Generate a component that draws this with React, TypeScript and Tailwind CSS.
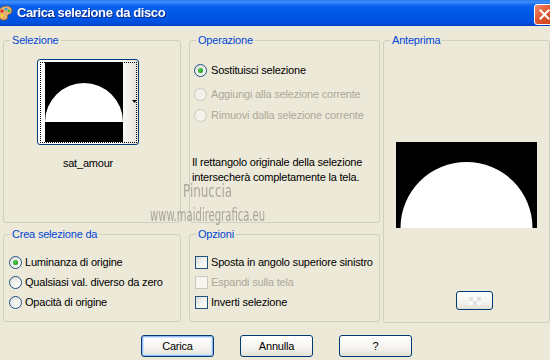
import type { ReactNode } from 'react'

function GroupBox({ title, className, children }: { title: string; className: string; children?: ReactNode }) {
  return (
    <fieldset className={`border border-[#d0d0bf] rounded-[3px] min-w-0 ${className}`}>
      <legend className="ml-[6px] px-[2px] text-[#0046d5] leading-[13px]">{title}</legend>
      {children}
    </fieldset>
  )
}

function Radio({ checked, disabled }: { checked?: boolean; disabled?: boolean }) {
  return (
    <span
      className={`w-[13px] h-[13px] rounded-full border shrink-0 flex items-center justify-center ${
        disabled
          ? 'border-[#cac8bb] bg-[#f2f1ea]'
          : 'border-[#1c5180] bg-[linear-gradient(135deg,#dcdcd7_0%,#f4f4f1_55%,#ffffff_100%)]'
      }`}
    >
      {checked && (
        <span className="w-[5px] h-[5px] rounded-full bg-[radial-gradient(circle_at_40%_40%,#55d455_0%,#21a121_60%,#1a8a1a_100%)]" />
      )}
    </span>
  )
}

function Checkbox({ disabled }: { disabled?: boolean }) {
  return (
    <span
      className={`w-[13px] h-[13px] border shrink-0 ${
        disabled
          ? 'border-[#cac8bb] bg-[#f6f5f0]'
          : 'border-[#1c5180] bg-[linear-gradient(135deg,#dcdcd7_0%,#f4f4f1_55%,#ffffff_100%)]'
      }`}
    />
  )
}

function XpButton({ label, isDefault }: { label: string; isDefault?: boolean }) {
  return (
    <button
      className={`w-[73px] h-[22px] border border-[#003c74] rounded-[3px] text-black bg-[linear-gradient(to_bottom,#ffffff_0%,#f4f3ee_60%,#e3e1d6_100%)] ${
        isDefault ? 'shadow-[inset_0_0_0_1px_#97b8f2,inset_0_0_0_2px_#cee7ff]' : ''
      }`}
    >
      {label}
    </button>
  )
}

export default function App() {
  return (
    <div className="w-[550px] h-[360px] overflow-hidden bg-[#ece9d8] font-['Liberation_Sans',Arial,sans-serif] text-[11px] tracking-[-0.2px] text-black relative">
      {/* Title bar */}
      <div className="h-[26px] relative flex items-center bg-[linear-gradient(to_bottom,#2a7af0_0%,#3d8ff8_8%,#0a62f0_22%,#0056e6_55%,#0053e1_85%,#0040c6_100%)]">
        <svg className="absolute left-[-4px] top-[5px]" width="17" height="16" viewBox="0 0 17 16">
          <path d="M2 8c0-4 4-7 8-7s6 2 6 5-3 3-4 4 1 4-3 5-7-2-7-7z" fill="#e8b070" stroke="#7a4a20" strokeWidth="0.8" />
          <circle cx="6" cy="6" r="1.6" fill="#e02020" />
          <circle cx="10" cy="4" r="1.5" fill="#20a0e0" />
          <circle cx="13" cy="6" r="1.3" fill="#30c030" />
          <circle cx="6" cy="10.5" r="1.4" fill="#f0e020" />
        </svg>
        <span className="ml-[17px] text-white font-bold text-[13px] tracking-[-0.4px] drop-shadow-[1px_1px_0_#0a2a8a]">
          Carica selezione da disco
        </span>
        <div className="absolute left-[534px] top-[4px] w-[21px] h-[21px] rounded-[3px] border border-white bg-[linear-gradient(135deg,#f08a6a_0%,#e25a32_45%,#c83a18_100%)] flex items-center justify-center">
          <svg width="11" height="11" viewBox="0 0 11 11">
            <path d="M1.5 1.5l8 8M9.5 1.5l-8 8" stroke="#fff" strokeWidth="2" strokeLinecap="square" />
          </svg>
        </div>
      </div>

      {/* Body */}
      <div className="flex pt-[8px] pl-[3px] gap-[3px]">
        <div className="flex flex-col gap-[5px]">
          <div className="flex gap-[8px]">
            <GroupBox title="Selezione" className="w-[178px] h-[189px]">
              <div className="ml-[33px] mt-[12px] w-[102px] flex flex-col items-center">
                <div className="relative w-[102px] h-[86px] border border-[#003c74] rounded-[3px] bg-[linear-gradient(to_right,#ffffff_0%,#ffffff_80%,#e4e2d8_100%)]">
                  <div className="absolute left-[2px] top-[2px] w-[97px] h-[81px] border border-dotted border-black" />
                  <svg className="absolute left-[7px] top-[2px]" width="78" height="80" viewBox="0 0 78 80">
                    <rect width="78" height="80" fill="#000" />
                    <path d="M0 60A39 39 0 0 1 78 60Z" fill="#fff" />
                  </svg>
                  <svg className="absolute left-[94px] top-[40px]" width="5" height="3" viewBox="0 0 5 3">
                    <path d="M0 0h5L2.5 3z" fill="#000" />
                  </svg>
                </div>
                <span className="mt-[10px] text-[11px]">sat_amour</span>
              </div>
            </GroupBox>
            <GroupBox title="Operazione" className="w-[191px] h-[189px]">
              <div className="flex flex-col">
                <div className="flex items-center gap-[4px] h-[16px] mt-[15px] pl-[4px]">
                  <Radio checked />
                  <span>Sostituisci selezione</span>
                </div>
                <div className="flex items-center gap-[4px] h-[16px] mt-[8px] pl-[4px] text-[#aca899]">
                  <Radio disabled />
                  <span>Aggiungi alla selezione corrente</span>
                </div>
                <div className="flex items-center gap-[4px] h-[16px] mt-[5px] pl-[4px] text-[#aca899]">
                  <Radio disabled />
                  <span>Rimuovi dalla selezione corrente</span>
                </div>
                <p className="mt-[32px] pl-[2px] leading-[15px]">
                  Il rettangolo originale della selezione
                  <br />
                  intersecherà completamente la tela.
                </p>
              </div>
            </GroupBox>
          </div>
          <div className="flex gap-[8px]">
            <GroupBox title="Crea selezione da" className="w-[178px] h-[94px]">
              <div className="flex flex-col mt-[11px] pl-[5px]">
                <div className="flex items-center gap-[3px] h-[20px]">
                  <Radio checked />
                  <span>Luminanza di origine</span>
                </div>
                <div className="flex items-center gap-[3px] h-[20px]">
                  <Radio />
                  <span>Qualsiasi val. diverso da zero</span>
                </div>
                <div className="flex items-center gap-[3px] h-[20px]">
                  <Radio />
                  <span>Opacità di origine</span>
                </div>
              </div>
            </GroupBox>
            <GroupBox title="Opzioni" className="w-[191px] h-[94px]">
              <div className="flex flex-col mt-[11px] pl-[5px]">
                <div className="flex items-center gap-[3px] h-[20px]">
                  <Checkbox />
                  <span>Sposta in angolo superiore sinistro</span>
                </div>
                <div className="flex items-center gap-[3px] h-[20px] text-[#aca899]">
                  <Checkbox disabled />
                  <span>Espandi sulla tela</span>
                </div>
                <div className="flex items-center gap-[3px] h-[20px]">
                  <Checkbox />
                  <span>Inverti selezione</span>
                </div>
              </div>
            </GroupBox>
          </div>
        </div>

        <GroupBox title="Anteprima" className="w-[167px] h-[289px]">
          <div className="flex flex-col">
            <svg className="self-center mt-[95px]" width="141" height="86" viewBox="0 0 141 86">
              <rect width="141" height="86" fill="#000" />
              <path d="M4.5 86A66 66 0 0 1 136.5 86Z" fill="#fff" />
            </svg>
            <button className="self-start ml-[72px] mt-[63px] w-[37px] h-[19px] border border-[#003c74] rounded-[3px] bg-[linear-gradient(to_bottom,#ffffff_0%,#f4f3ee_60%,#e3e1d6_100%)] flex items-center justify-center">
              <svg width="12" height="8" viewBox="0 0 12 8">
                <rect x="0" y="0" width="4" height="4" fill="#e2e2e2" />
                <rect x="8" y="0" width="4" height="4" fill="#e2e2e2" />
                <rect x="4" y="4" width="4" height="4" fill="#e2e2e2" />
                <rect x="4" y="0" width="4" height="4" fill="#fafafa" />
                <rect x="0" y="4" width="4" height="4" fill="#fafafa" />
                <rect x="8" y="4" width="4" height="4" fill="#fafafa" />
              </svg>
            </button>
          </div>
        </GroupBox>
      </div>

      {/* Buttons */}
      <div className="flex justify-center gap-[26px] mt-[12px] pl-[3px]">
        <XpButton label="Carica" isDefault />
        <XpButton label="Annulla" />
        <XpButton label="?" />
      </div>

      {/* Watermark */}
      <span className="absolute left-[183px] top-[184px] origin-left scale-x-[0.78] text-[#aaa699] text-[17px] leading-[15px] tracking-[0px] font-['Liberation_Sans_Narrow','DejaVu_Sans_Condensed',sans-serif] pointer-events-none">
        Pinuccia
      </span>
      <span className="absolute left-[150px] top-[206px] origin-left scale-x-[0.62] text-[#aaa699] text-[18px] leading-[18px] tracking-[0px] font-['Liberation_Sans_Narrow','DejaVu_Sans_Condensed',sans-serif] pointer-events-none">
        www.maidiregrafica.eu
      </span>
    </div>
  )
}
